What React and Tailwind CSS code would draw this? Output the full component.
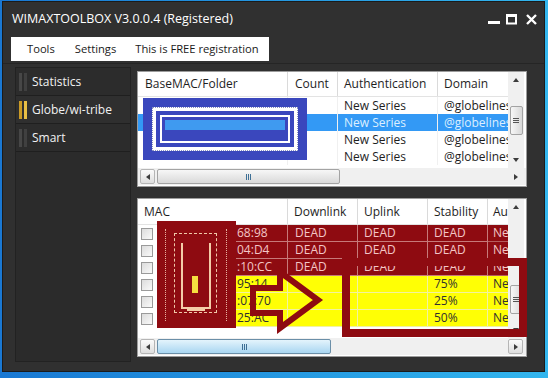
import React from 'react';

const MAROON = 'bg-[#8e0b11]';

// bottom grid rows: text fragments that are still visible in the picture
const rows = [
  { mac: '68:98', dl: 'DEAD', ul: 'DEAD', st: 'DEAD', au: 'Ne', dead: true },
  { mac: '04:D4', dl: 'DEAD', ul: 'DEAD', st: 'DEAD', au: 'Ne', dead: true },
  { mac: ':10:CC', dl: 'DEAD', ul: 'DEAD', st: 'DEAD', au: 'Ne', dead: true },
  { mac: '95:14', dl: '', ul: '', st: '75%', au: 'Ne' },
  { mac: ':07:70', dl: '', ul: '', st: '25%', au: 'Ne' },
  { mac: '25:AC', dl: '', ul: '', st: '50%', au: 'Ne' },
];

function Tri({ dir }) {
  const d = {
    up: 'M1 5 L4 1 L7 5 Z',
    down: 'M1 1 L4 5 L7 1 Z',
    left: 'M5 1 L1 4 L5 7 Z',
    right: 'M1 1 L5 4 L1 7 Z',
  }[dir];
  const box = dir === 'up' || dir === 'down' ? '0 0 8 6' : '0 0 6 8';
  const size = dir === 'up' || dir === 'down' ? 'w-[8px] h-[6px]' : 'w-[6px] h-[8px]';
  return (
    <svg viewBox={box} className={size}>
      <path d={d} fill="#3c3c3c" />
    </svg>
  );
}

function ArrowBtn({ dir, boxed }) {
  return (
    <div
      className={
        'flex h-[15px] w-[15px] shrink-0 items-center justify-center rounded-[2px] ' +
        (boxed ? 'border border-[#b5b5b5] bg-gradient-to-b from-[#fbfbfb] to-[#dedede]' : '')
      }
    >
      <Tri dir={dir} />
    </div>
  );
}

function Grip({ vertical }) {
  return vertical ? (
    <div className="flex flex-col gap-[1px]">
      <div className="h-px w-[6px] bg-[#555]" />
      <div className="h-px w-[6px] bg-[#555]" />
      <div className="h-px w-[6px] bg-[#555]" />
    </div>
  ) : (
    <div className="flex gap-[1px]">
      <div className="h-[6px] w-px bg-[#3d6f95]" />
      <div className="h-[6px] w-px bg-[#3d6f95]" />
      <div className="h-[6px] w-px bg-[#3d6f95]" />
    </div>
  );
}

function HScroll({ thumbW, blue }) {
  return (
    <div className="flex h-[17px] items-center bg-[#f0f0f0] pl-[2px] pr-[3px]">
      <ArrowBtn dir="left" boxed />
      <div className="flex flex-1 items-center pl-[2px]">
        <div
          className={
            'flex h-[15px] items-center justify-center rounded-[2px] border ' +
            (blue
              ? 'border-[#6b8fa8] bg-gradient-to-b from-[#e4f4fc] to-[#a9d6f1]'
              : 'border-[#a3a3a3] bg-gradient-to-b from-[#f7f7f7] to-[#d9d9d9]')
          }
          style={{ width: thumbW }}
        >
          <Grip />
        </div>
      </div>
      <ArrowBtn dir="right" boxed={blue} />
    </div>
  );
}

function VScroll({ thumbTop, h }) {
  return (
    <div className="flex w-[16px] flex-col items-center bg-[#f0f0f0]" style={{ height: h }}>
      <div className="flex h-[16px] items-center justify-center">
        <Tri dir="up" />
      </div>
      <div className="flex flex-1 flex-col items-center" style={{ paddingTop: thumbTop }}>
        <div className="flex h-[29px] w-[13px] items-center justify-center rounded-[2px] border border-[#a3a3a3] bg-gradient-to-r from-[#f7f7f7] to-[#d8d8d8]">
          <Grip vertical />
        </div>
      </div>
      <div className="flex h-[16px] items-center justify-center">
        <Tri dir="down" />
      </div>
    </div>
  );
}

function Checkbox() {
  return <div className="h-[12px] w-[12px] border border-[#9a9a9a] bg-gradient-to-br from-[#dcdcdc] to-[#fafafa]" />;
}

function SideItem({ label, active }) {
  return (
    <div
      className={
        'flex h-[28px] items-center border-b border-[#1f1f1f] ' + (active ? 'bg-[#2f2f2f]' : 'bg-[#2c2c2c]')
      }
    >
      <div className="ml-[3px] mr-[5px] flex h-[18px] gap-[2px]">
        <div className={'w-[3px] ' + (active ? 'bg-[#c99a26]' : 'bg-[#474747]')} />
        <div className={'w-[3px] ' + (active ? 'bg-[#e8be45]' : 'bg-[#404040]')} />
      </div>
      <span className="text-[12px] text-[#f2f2f2]">{label}</span>
    </div>
  );
}

function TopGrid() {
  const data = [0, 1, 2, 3];
  return (
    <div className="h-[116px] w-[390px] border border-[#9c9c9c] bg-white">
      <div className="flex h-[96px]">
        <div className="w-[370px] text-[12px] text-[#1e1e1e]">
          <div className="flex h-[25px] items-center border-b border-[#e3e3e3]">
            <div className="flex h-full w-[150px] items-center border-r border-[#dadada] pl-[7px]">BaseMAC/Folder</div>
            <div className="flex h-full w-[50px] items-center border-r border-[#dadada] pl-[7px]">Count</div>
            <div className="flex h-full w-[100px] items-center border-r border-[#dadada] pl-[6px]">Authentication</div>
            <div className="flex h-full w-[70px] items-center overflow-hidden whitespace-nowrap pl-[6px]">Domain</div>
          </div>
          {data.map((i) => {
            const sel = i === 1;
            return (
              <div key={i} className={'flex h-[17px] items-center ' + (sel ? 'bg-[#3399f5] text-[#dcefff]' : '')}>
                <div className="h-full w-[150px] border-r border-[#f0f0f0]" />
                <div className="h-full w-[50px] border-r border-[#f0f0f0]" />
                <div className="flex h-full w-[100px] items-center border-r border-[#f0f0f0] pl-[6px]">New Series</div>
                <div className="flex h-full w-[70px] items-center overflow-hidden whitespace-nowrap pl-[6px]">@globelines</div>
              </div>
            );
          })}
        </div>
        <VScroll h={96} thumbTop={18} />
      </div>
      <HScroll thumbW={183} />
    </div>
  );
}

function BottomGrid() {
  return (
    <div className="h-[159px] w-[390px] border border-[#9c9c9c] bg-white">
      <div className="flex h-[139px]">
        <div className="w-[370px] text-[12px]">
          <div className="flex h-[26px] items-center border-b border-[#e3e3e3] text-[#1e1e1e]">
            <div className="flex h-full w-[150px] items-center border-r border-[#dadada] pl-[6px]">MAC</div>
            <div className="flex h-full w-[70px] items-center border-r border-[#dadada] pl-[6px]">Downlink</div>
            <div className="flex h-full w-[70px] items-center border-r border-[#dadada] pl-[6px]">Uplink</div>
            <div className="flex h-full w-[60px] items-center border-r border-[#dadada] pl-[6px]">Stability</div>
            <div className="flex h-full w-[20px] items-center overflow-hidden whitespace-nowrap pl-[5px]">Au</div>
          </div>
          {rows.map((r, i) => {
            const cell = r.dead
              ? 'bg-[#8e0b11] text-[#f3c6c6] border-b border-[#b65c5c]'
              : 'bg-[#ffff05] text-[#303030] border-b border-[#f2f2a0]';
            const sep = r.dead ? 'border-r border-[#c77a7a]' : 'border-r border-[#ecec8a]';
            return (
              <div key={i} className="flex h-[17px]">
                <div className="flex w-[19px] items-center pl-[3px]">
                  <Checkbox />
                </div>
                <div className={'flex w-[131px] items-center pl-[80px] ' + cell + ' ' + sep}>{r.mac}</div>
                <div className={'flex w-[70px] items-center pl-[7px] ' + cell + ' ' + sep}>{r.dl}</div>
                <div className={'flex w-[70px] items-center pl-[6px] ' + cell + ' ' + sep}>{r.ul}</div>
                <div className={'flex w-[60px] items-center pl-[6px] ' + cell + ' ' + sep}>{r.st}</div>
                <div className={'flex w-[20px] items-center overflow-hidden whitespace-nowrap pl-[5px] ' + cell}>{r.au}</div>
              </div>
            );
          })}
        </div>
        <VScroll h={139} thumbTop={70} />
      </div>
      <HScroll thumbW={174} blue />
    </div>
  );
}

export default function App() {
  return (
    <div className="relative h-[378px] w-[548px] overflow-hidden bg-gradient-to-r from-[#1a78d2] to-[#33b6ee] pl-[2px] pt-[1px] font-['Open_Sans',sans-serif]">
      <div className="flex h-[371px] w-[543px] flex-col border border-[#1b1b1b] bg-[#303030]">
        {/* title bar */}
        <div className="flex h-[34px] items-center justify-between pl-[9px] pr-[7px]">
          <span className="text-[12.5px] text-white">WIMAXTOOLBOX V3.0.0.4 (Registered)</span>
          <div className="flex items-center gap-[6px]">
            <svg viewBox="0 0 12 12" className="h-[12px] w-[12px]">
              <rect x="0" y="8" width="12" height="3" fill="#fff" />
            </svg>
            <svg viewBox="0 0 11 11" className="h-[11px] w-[11px]">
              <rect x="1" y="1.5" width="9" height="8" fill="none" stroke="#fff" strokeWidth="2" />
              <rect x="0" y="0" width="11" height="3" fill="#fff" />
            </svg>
            <svg viewBox="0 0 11 11" className="ml-[3px] h-[11px] w-[11px]">
              <path d="M1 1 L10 10 M10 1 L1 10" stroke="#fff" strokeWidth="2.4" />
            </svg>
          </div>
        </div>

        {/* menu */}
        <div className="pl-[8px] pt-[1px]">
          <div className="flex h-[24px] w-[258px] items-center bg-white pl-[16px] text-[11.2px] text-[#1a1a1a]">
            <span>Tools</span>
            <span className="ml-[20px]">Settings</span>
            <span className="ml-[19px]">This is FREE registration</span>
          </div>
        </div>
        <div className="mt-[2px] h-px bg-[#252525]" />

        {/* content */}
        <div className="mt-[3px] flex pl-[12px]">
          <div className="h-[295px] w-[116px] border border-[#222] bg-[#2b2b2b]">
            <SideItem label="Statistics" />
            <SideItem label="Globe/wi-tribe" active />
            <SideItem label="Smart" />
          </div>
          <div className="ml-[6px] flex flex-col pt-[4px]">
            <TopGrid />
            <div className="h-[11px]" />
            <BottomGrid />
          </div>
        </div>
      </div>

      {/* blue redaction over the selected folder */}
      <div className="absolute left-[143px] top-[98px] h-[62px] w-[164px] bg-[#3a47bd] p-[9px]">
        <div className="h-full border border-dotted border-[#8890c0] bg-white p-[3px]">
          <div className="h-full bg-[#3a47bd] p-[4px]">
            <div className="h-full bg-white p-[2px]">
              <div className="flex h-full items-start bg-[#3a47bd] p-[3px]">
                <div className="h-[10px] w-full bg-[#3f9af0]" />
              </div>
            </div>
          </div>
        </div>
      </div>

      {/* maroon redaction over the MAC column */}
      <div className={'absolute left-[157px] top-[221px] h-[107px] w-[79px] ' + MAROON}>
        <div className="absolute left-[8px] top-[8px] h-[92px] w-0 border-l border-dotted border-[#e8b0a0]" />
        <div className="absolute left-[69px] top-[8px] h-[92px] w-0 border-l border-dotted border-[#e8b0a0]" />
        <div className="absolute left-[17px] top-[12px] h-[80px] w-[43px] border border-dashed border-[#f0c8a8]" />
        <div className="absolute left-[24px] top-[22px] h-[66px] w-[30px] border-2 border-t-0 border-[#f4cda8]" />
        <div className="absolute left-[35px] top-[55px] h-[17px] w-[6px] bg-[#f6df40]" />
        <div className="absolute left-[30px] top-[88px] h-[2px] w-[18px] bg-[#f4cda8]" />
      </div>

      {/* arrow */}
      <svg className="absolute left-[240px] top-[266px] h-[70px] w-[86px]" viewBox="0 0 86 70">
        <path d="M13 22 L40 22 L40 6 L78 34 L40 62 L40 47 L13 47 Z" fill="none" stroke="#8e0b11" strokeWidth="6" strokeLinejoin="miter" />
      </svg>

      {/* maroon box over the stability column */}
      <div className="absolute left-[342px] top-[258px] h-[79px] w-[185px] border-[8px] border-[#8e0b11]" />
    </div>
  );
}
